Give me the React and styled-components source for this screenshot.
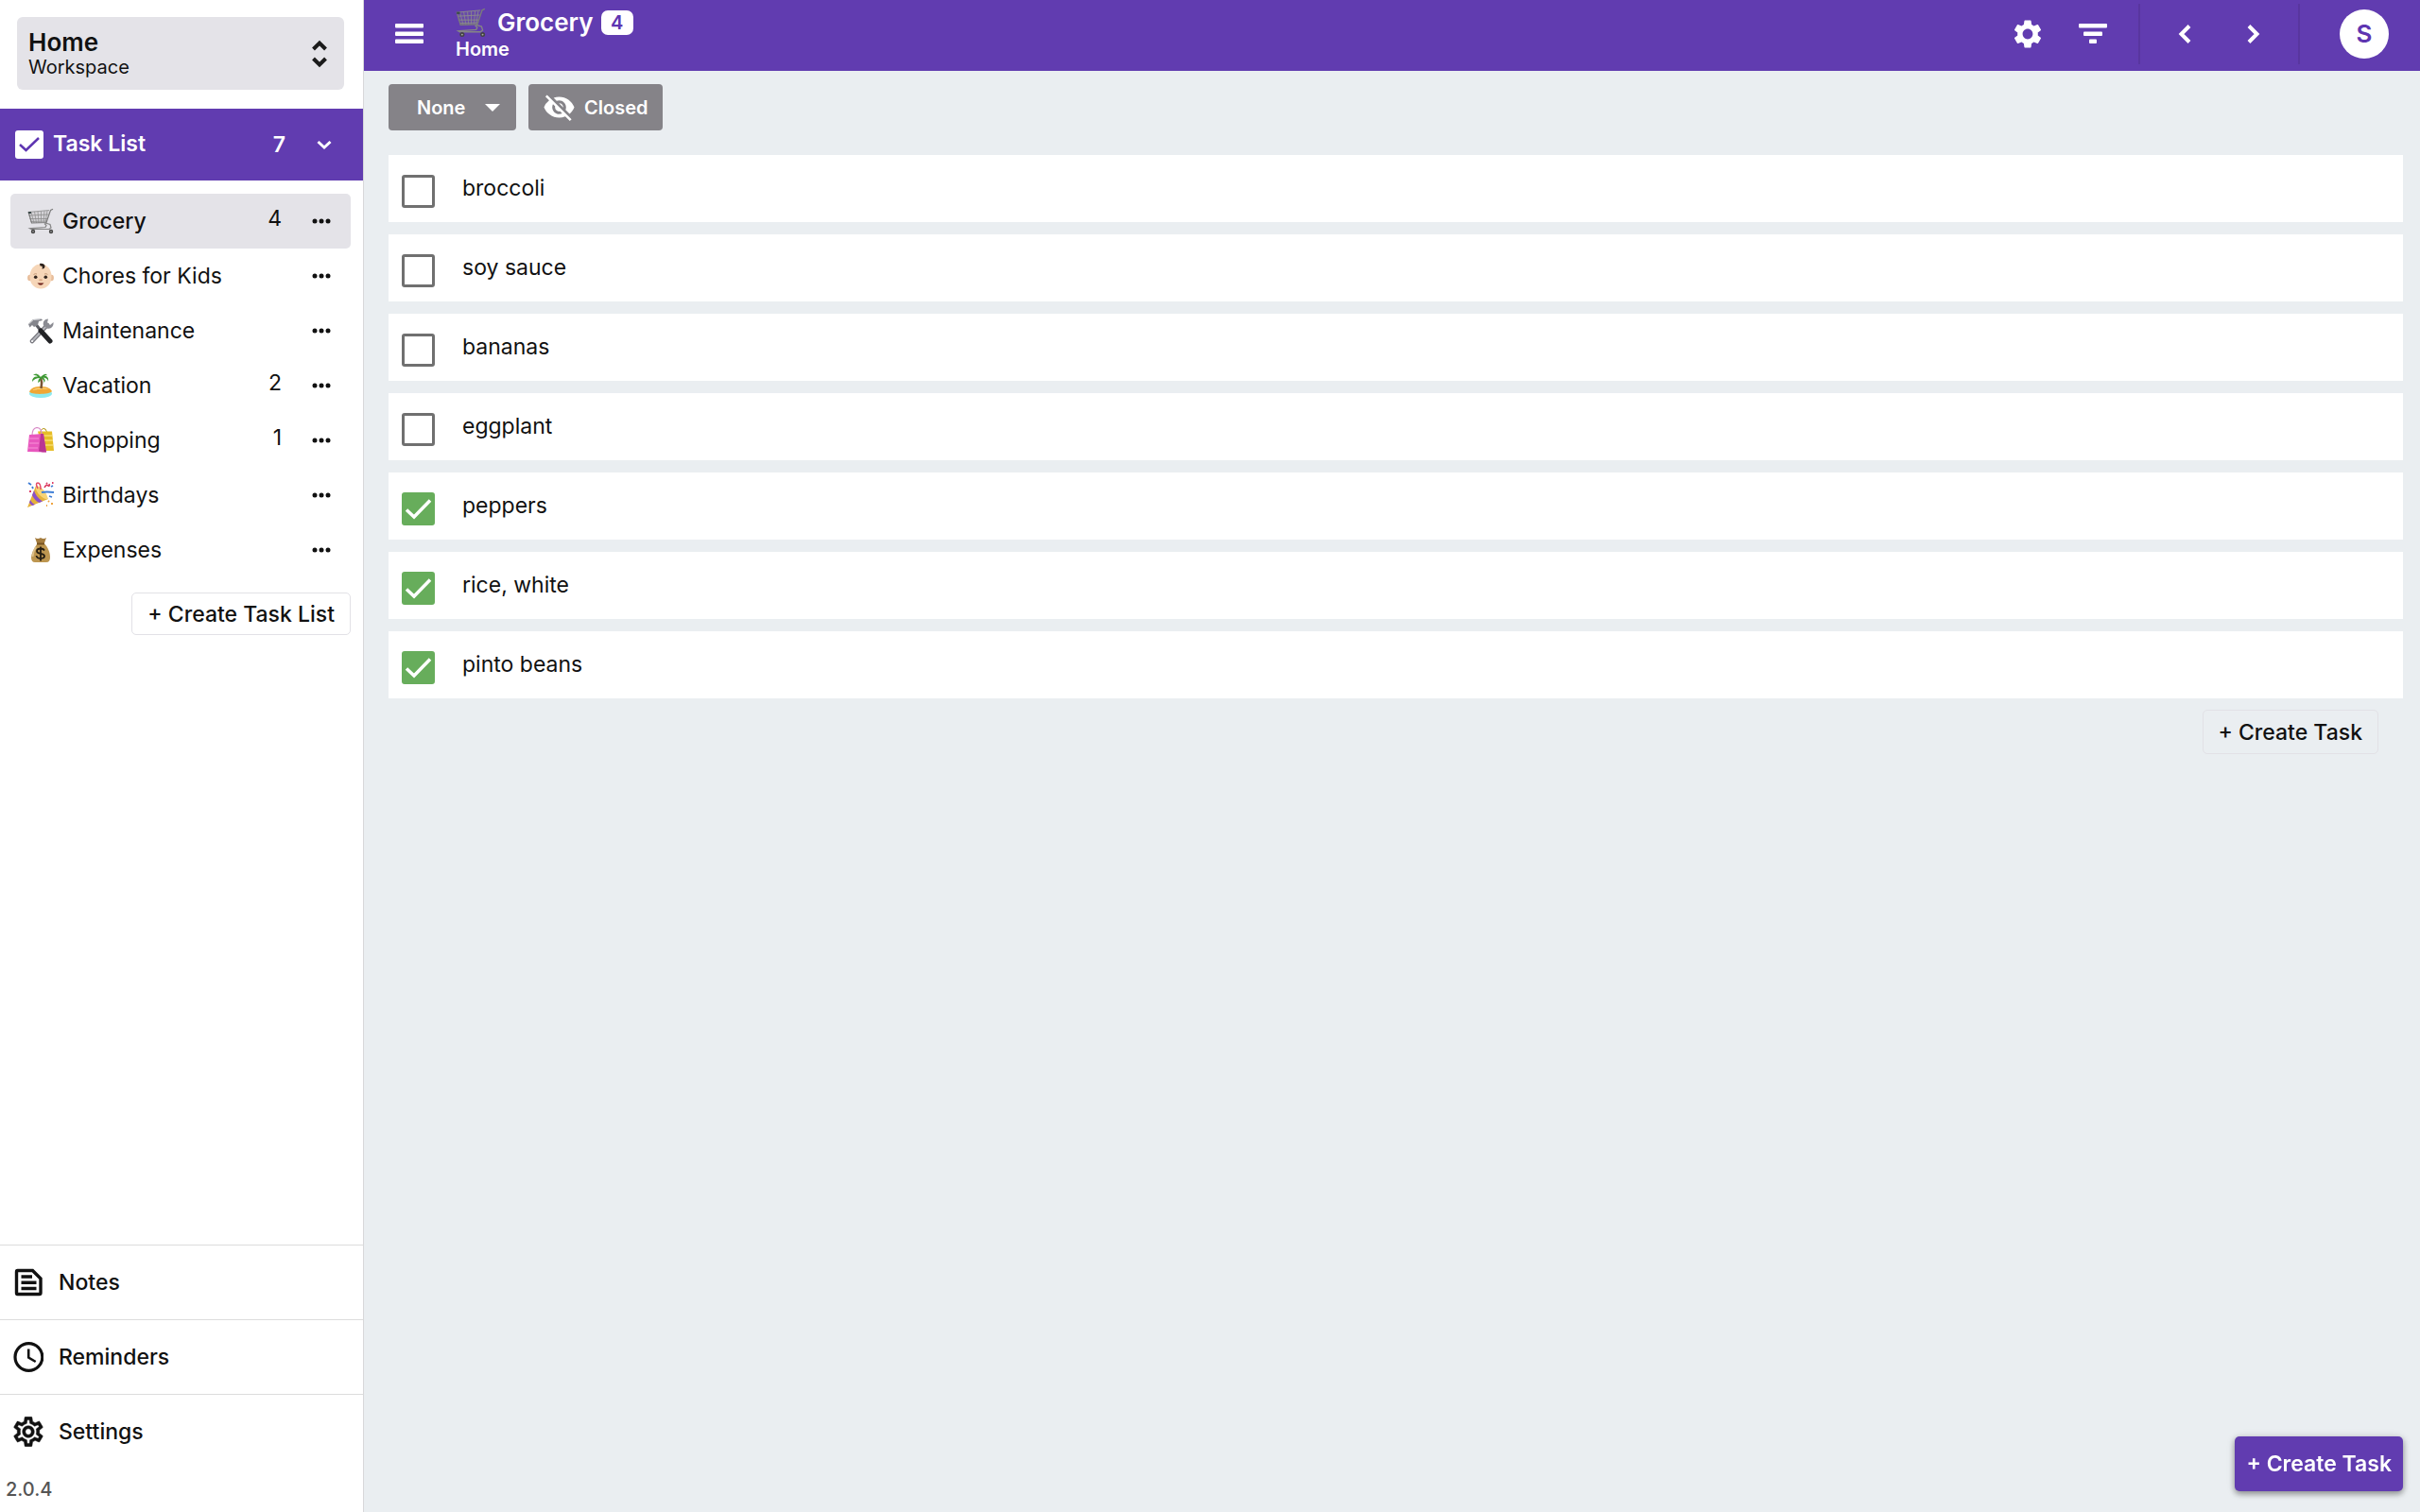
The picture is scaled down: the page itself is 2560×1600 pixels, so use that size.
import React, { useState } from 'react';
import styled, { createGlobalStyle } from 'styled-components';
import { MdSettings, MdOutlineSettings, MdVisibilityOff } from 'react-icons/md';

const GlobalStyle = createGlobalStyle`
    * {
        box-sizing: border-box;
    }
    body {
        margin: 0;
        background: #eaeef1;
        color: #111;
        font-family: Inter, "Liberation Sans", sans-serif;
        font-size: 23px;
        line-height: 28px;
    }
    button, select, input {
        font: inherit;
        color: inherit;
        margin: 0;
    }
    button {
        cursor: pointer;
        background: none;
        border: 0;
        padding: 0;
    }
    a {
        color: inherit;
        text-decoration: none;
    }
    ul {
        list-style: none;
        margin: 0;
        padding: 0;
    }
    svg {
        display: block;
        flex: none;
    }
`

const Page = styled.div`
    display: grid;
    grid-template-columns: 385px 1fr;
    min-height: 100vh;
`

const Sidebar = styled.aside`
    display: flex;
    flex-direction: column;
    background: #fff;
    border-right: 1px solid #d8d8da;
`

const WorkspaceButton = styled.button`
    display: flex;
    align-items: center;
    justify-content: space-between;
    margin: 18px 20px 20px 18px;
    padding: 0 12px;
    height: 77px;
    border-radius: 6px;
    background: #e4e3e8;
    text-align: left;
`

const WorkspaceName = styled.strong`
    display: block;
    font-size: 26px;
    font-weight: 600;
    line-height: 28px;
`

const WorkspaceKind = styled.span`
    display: block;
    font-size: 20px;
    line-height: 24px;
`

const SectionHeader = styled.button`
    display: flex;
    align-items: center;
    height: 76px;
    padding: 0 31px 0 16px;
    background: #613cb0;
    color: #fff;
    font-weight: 600;
    .title {
        flex: 1;
        margin-left: 10px;
        padding-bottom: 2px;
        text-align: left;
    }
    .count {
        margin-right: 31px;
    }
`

const Lists = styled.ul`
    padding: 14px 13px 0 11px;
`

const ListRow = styled.li`
    display: flex;
    align-items: center;
    height: 58px;
    padding: 0 21px 0 18px;
    border-radius: 5px;
    background: ${({ $active }) => ($active ? '#e4e3e8' : 'transparent')};
    font-weight: ${({ $active }) => ($active ? 500 : 400)};
    a {
        display: flex;
        flex: 1;
        align-items: center;
        gap: 9px;
    }
    .count {
        padding-bottom: 6px;
        font-weight: 400;
    }
    button {
        margin-left: 32px;
    }
`

const OutlineButton = styled.button`
    height: ${({ $height }) => $height}px;
    padding: 0 16px;
    border: 1px solid #e2e1e6;
    border-radius: 5px;
    font-weight: 500;
`

const ListActions = styled.div`
    display: flex;
    justify-content: flex-end;
    padding: 16px 13px 16px 0;
`

const BottomNav = styled.nav`
    margin-top: auto;
    a {
        display: flex;
        align-items: center;
        gap: 16px;
        height: 79px;
        padding-left: 14px;
        border-top: 1px solid #dcdcdc;
        font-weight: 500;
    }
`

const Version = styled.div`
    height: 46px;
    padding-left: 6px;
    color: #555;
    font-size: 20px;
    font-weight: 500;
    line-height: 44px;
`

const Main = styled.main`
    min-width: 0;
`

const TopBar = styled.header`
    display: flex;
    align-items: center;
    height: 75px;
    padding: 0 33px 3px;
    background: #613cb0;
    color: #fff;
`

const Heading = styled.div`
    flex: 1;
    margin-left: 33px;
    h1 {
        display: flex;
        align-items: center;
        gap: 12px;
        margin: 0;
        font-size: 26px;
        font-weight: 600;
        line-height: 30px;
    }
    p {
        margin: 0;
        font-size: 20px;
        font-weight: 600;
        line-height: 24px;
    }
`

const Badge = styled.span`
    min-width: 34px;
    margin-left: -4px;
    border-radius: 7px;
    background: #fff;
    color: #5e35b1;
    font-size: 20px;
    line-height: 26px;
    text-align: center;
`

const BarGroup = styled.div`
    display: flex;
    align-items: center;
    justify-content: space-between;
    width: ${({ $width }) => $width}px;
    height: 64px;
    padding: 0 ${({ $pad }) => $pad}px;
    border-right: 2px solid #59369f;
`

const Avatar = styled.button`
    width: 52px;
    height: 52px;
    margin: 0 0 0 42px;
    border-radius: 50%;
    background: #fff;
    color: #5e35b1;
    font-size: 26px;
    font-weight: 600;
`

const Filters = styled.div`
    display: flex;
    gap: 13px;
    padding: 14px 26px 26px;
    color: #fff;
    font-size: 20px;
    font-weight: 600;
`

const SortBox = styled.div`
    display: grid;
    align-items: center;
    width: 135px;
    height: 49px;
    border-radius: 4px;
    background: #858388;
    select, svg {
        grid-area: 1 / 1;
    }
    select {
        height: 100%;
        padding: 0 30px;
        border: 0;
        background: none;
        appearance: none;
    }
    option {
        color: #111;
    }
    svg {
        justify-self: end;
        margin-right: 17px;
        pointer-events: none;
    }
`

const ClosedButton = styled.button`
    display: flex;
    align-items: center;
    gap: 9px;
    height: 49px;
    padding: 0 16px 0 15px;
    border-radius: 4px;
    background: #858388;
`

const Tasks = styled.ul`
    display: flex;
    flex-direction: column;
    gap: 13px;
    padding: 0 18px 0 26px;
`

const TaskRow = styled.li`
    background: #fff;
    label {
        display: flex;
        align-items: center;
        gap: 29px;
        height: 71px;
        padding: 0 14px;
        cursor: pointer;
    }
    span {
        padding-bottom: 2px;
    }
`

const CheckCell = styled.div`
    display: grid;
    padding-top: 6px;
    input, svg {
        grid-area: 1 / 1;
    }
    input {
        width: 35px;
        height: 35px;
        border: 3px solid #707070;
        border-radius: 3px;
        appearance: none;
        cursor: pointer;
    }
    input:checked {
        border-color: #67ad5b;
        background: #67ad5b;
    }
    svg {
        pointer-events: none;
    }
`

const TaskActions = styled.div`
    display: flex;
    justify-content: flex-end;
    padding: 12px 44px;
`

const Fab = styled.button`
    position: fixed;
    right: 18px;
    bottom: 22px;
    height: 58px;
    padding: 0 12px;
    border-radius: 5px;
    background: #613cb0;
    box-shadow: 0 3px 6px rgba(0, 0, 0, .35), 0 1px 10px rgba(0, 0, 0, .14);
    color: #fff;
    font-weight: 600;
`

const Cart = ({ size = 28 }) => (
    <svg width={size} height={size} viewBox="0 0 28 28" fill="none" aria-hidden="true">
        <path d="M1 4l22-1.500-2.500 13.500H5z" fill="#8c8c8c" fillOpacity=".18" />
        <path d="M1 4.500l22-2M1.700 8l20.700-1M2.400 11.500h19.300M3.500 14.500l17.600-.5" stroke="#8b8b8b" strokeWidth=".8" />
        <path d="M4 4.500L7 16M7.500 4l2 12M11 3.800l1 12M14.500 3.500v12M18 3.200l-1 12.500M21 3l-2 12.500" stroke="#8b8b8b" strokeWidth=".7" />
        <path d="M1 4l3.500 12 15.500-.5 4.500-13 2.500-1.200" stroke="#7b7b7b" strokeWidth="1.200" />
        <path d="M19 16l5 1.500 1 3.500-2 1.500H4l-1.500-.8L19 20.500l1-2-2-2" stroke="#858585" strokeWidth="1.200" />
        <circle cx="6" cy="25" r="2.200" fill="#444" />
        <circle cx="25" cy="25" r="2.200" fill="#444" />
        <circle cx="6" cy="25" r=".8" fill="#aaa" />
        <circle cx="25" cy="25" r=".8" fill="#aaa" />
        <rect x="1" y="4" width="3" height="2" fill="#3c4a4a" />
    </svg>
)

const Baby = () => (
    <svg width="28" height="28" viewBox="0 0 28 28" aria-hidden="true">
        <ellipse cx="2.500" cy="16" rx="2.400" ry="3.200" fill="#e8bd9a" />
        <ellipse cx="25.500" cy="16" rx="2.400" ry="3.200" fill="#e8bd9a" />
        <path d="M14 1.500C6.500 1.500 2.500 8 2.500 14.500 2.500 22 7 27.500 14 27.500s11.500-5.500 11.500-13C25.500 8 21.500 1.500 14 1.500z" fill="#f6d6b8" />
        <path d="M13 1c5-1 7 3 4.500 5-1 .8-2 .4-2.500 0 1.500-.5 1.500-2.500-1.500-2.500z" fill="#2b211c" />
        <path d="M6.500 12.500q2-1.500 3.500-.5M18 12q2-1 3.500.5" fill="none" stroke="#c49a78" />
        <circle cx="8.700" cy="15.300" r="1.800" fill="#33261f" />
        <circle cx="19.300" cy="15.300" r="1.800" fill="#33261f" />
        <ellipse cx="14" cy="18.300" rx="2" ry="1" fill="#dba984" />
        <path d="M10.500 21.500h7q-3.500 4.500-7 0z" fill="#6f241d" />
    </svg>
)

const Tools = () => (
    <svg width="28" height="28" viewBox="0 0 28 28" fill="none" aria-hidden="true">
        <path d="M21 8L5 25" stroke="#75757c" strokeWidth="4.500" strokeLinecap="round" />
        <path d="M21 8L5 25" stroke="#b4b5bb" strokeWidth="2" strokeLinecap="round" />
        <path d="M22 1.500c-4 0-6 3-5 7l4 3c4 1 7-2 6.500-6.500l-3.500 3-3-2.500z" fill="#8b8c93" />
        <path d="M8 6l7 9" stroke="#5b5c63" strokeWidth="3" />
        <path d="M14 14l10 11" stroke="#222326" strokeWidth="5" strokeLinecap="round" />
        <path d="M1 7l5-5 9-.5 1 1.500-4 1-1 4-4 2-2-2-2.500 2.500z" fill="#85868d" />
        <path d="M2 6.500l4.500-4L13 2" stroke="#c8c9ce" />
        <circle cx="5" cy="25" r="1" fill="#fff" />
    </svg>
)

const Island = () => (
    <svg width="28" height="28" viewBox="0 0 28 28" fill="none" aria-hidden="true">
        <ellipse cx="14" cy="22.500" rx="12" ry="4.500" fill="#8deaf0" />
        <path d="M2 20.500C4 16 9 15 14 15s10 1 12 5c-2 3.500-22 4-24 .500z" fill="#f0a735" />
        <path d="M4 19q9-5 19-1-9-1-19 1z" fill="#fbd27a" />
        <path d="M14 5q2 6 .5 12" stroke="#7a5534" strokeWidth="2.500" />
        <path d="M14 5Q10-1 6 3q4-.5 5 1.500Q5 4 5 10q3-4 8-4-2 2-2 5 3-1 3.500-5Q18 8 17.500 11 20 9 17 5.500q4 .5 5 4 1-5-4-6 2-1 3 0-1-4-7 1.500z" fill="#3f9a35" />
    </svg>
)

const Bags = () => (
    <svg width="28" height="28" viewBox="0 0 28 28" fill="none" aria-hidden="true">
        <path d="M14 6V4q2-4 5-2l2 4" stroke="#b4940e" />
        <path d="M11 4.500h15L28 25H16z" fill="#e6bd27" />
        <path d="M12 9h14M13 14h14M13 19h14" stroke="#f7dc6c" strokeWidth="1.500" />
        <path d="M5 9q0-8 5-8.500 5 .5 5 7" stroke="#d88bc7" strokeWidth="1.200" />
        <path d="M2 8l15-1 3 19.500L0 26z" fill="#e857be" />
        <path d="M14 7h3l3 19.500h-4l-4-1z" fill="#b93494" />
        <path d="M2 12h10M2 17h10M1 22h10" stroke="#f27fd0" strokeWidth="1.500" />
    </svg>
)

const Party = () => (
    <svg width="28" height="28" viewBox="0 0 28 28" fill="none" aria-hidden="true">
        <path d="M9 4L0 27l22-9q-8-3-13-14z" fill="#e5b23a" />
        <path d="M7 9q2 7 9 11.500l-3.500 1.500Q7 19 5 14zM3 19q2 4 5 5l-3 1-3-3z" fill="#8a50c8" />
        <path d="M9 4q-1 5 4 10t9 4q-1-5-5-9.500T9 4z" fill="#f6d476" />
        <path d="M15 11q5-1 13 0" stroke="#3f7fd6" strokeWidth="2" />
        <path d="M11 7q-3-6 0-6t3 7" stroke="#e34a68" strokeWidth="1.500" />
        <path d="M18 6q2-4 4-2 2 1 1-2" stroke="#d9365b" strokeWidth="1.500" />
        <path d="M1 1l3 2M5 5l1 2M25 5l2-1M23 15l3 1" stroke="#3c7bd5" strokeWidth="1.800" />
        <path d="M26 1h1.500M20 1l1 1M2 10h2" stroke="#dc3c67" strokeWidth="2" />
        <path d="M25 23h2M22 20l1 1M20 25h1" stroke="#efa340" strokeWidth="2" />
    </svg>
)

const MoneyBag = () => (
    <svg width="28" height="28" viewBox="0 0 28 28" fill="none" aria-hidden="true">
        <path d="M8 1q3 2 6 0 3 2 6 0l-2.500 7h-7z" fill="#a47c3e" />
        <path d="M10.500 7h7C22 11 24 17 24 22q0 5-4 5H8q-4 0-4-5 0-5 6.500-15z" fill="#bd9650" />
        <path d="M9 11q-3 4-3.500 10" stroke="#dcc08a" strokeWidth="2" />
        <path d="M10 7.500h8" stroke="#765322" strokeWidth="2" />
        <path d="M18 14.500q-1-2-4-2-4 0-4 2.800c0 3.700 8 1.700 8 5.200 0 3-8 3.500-8.500-.5M14 10.500v15" stroke="#241d12" strokeWidth="1.800" />
    </svg>
)

const Dots = () => (
    <svg width="20" height="6" viewBox="0 0 20 6" fill="#111">
        <circle cx="3" cy="3" r="2.500" />
        <circle cx="10" cy="3" r="2.500" />
        <circle cx="17" cy="3" r="2.500" />
    </svg>
)

const Chevron = ({ d, width, height, weight = 4 }) => (
    <svg width={width} height={height} viewBox={`0 0 ${width} ${height}`} fill="none" stroke="currentColor" strokeWidth={weight}>
        <path d={d} />
    </svg>
)

const lists = [
    { name: 'Grocery', icon: <Cart />, count: 4 },
    { name: 'Chores for Kids', icon: <Baby /> },
    { name: 'Maintenance', icon: <Tools /> },
    { name: 'Vacation', icon: <Island />, count: 2 },
    { name: 'Shopping', icon: <Bags />, count: 1 },
    { name: 'Birthdays', icon: <Party /> },
    { name: 'Expenses', icon: <MoneyBag /> },
]

const NotesIcon = () => (
    <svg width="32" height="32" viewBox="0 0 32 32" fill="none" stroke="#111" strokeWidth="3.400">
        <path d="M4.500 3.500h16l8.500 8.500V27q0 1.500-1.500 1.500h-23Q3.500 28.500 3.500 27V5q0-1.500 1-1.500z" />
        <path d="M8.500 10H20M8.500 16.200h16M8.500 22.500h16" />
    </svg>
)

const ClockIcon = () => (
    <svg width="32" height="32" viewBox="0 0 32 32" fill="none" stroke="#111" strokeWidth="3.200">
        <circle cx="16.400" cy="16" r="14.400" />
        <path d="M16.200 7.500v9l7.500 4.500" strokeWidth="2.600" />
    </svg>
)

const App = () => {
    const [active, setActive] = useState('Grocery');
    const [tasks, setTasks] = useState([
        { name: 'broccoli', done: false },
        { name: 'soy sauce', done: false },
        { name: 'bananas', done: false },
        { name: 'eggplant', done: false },
        { name: 'peppers', done: true },
        { name: 'rice, white', done: true },
        { name: 'pinto beans', done: true },
    ]);

    const toggle = (name) => {
        setTasks(tasks.map((task) => (task.name === name ? { ...task, done: !task.done } : task)))
    }

    return (
        <Page>
            <GlobalStyle />
            <Sidebar>
                <WorkspaceButton>
                    <span>
                        <WorkspaceName>Home</WorkspaceName>
                        <WorkspaceKind>Workspace</WorkspaceKind>
                    </span>
                    <svg width="28" height="32" viewBox="0 0 28 32" fill="none" stroke="#1b1b1b" strokeWidth="4">
                        <path d="M7.500 11l6.500-6.500 6.500 6.500M7.500 21l6.500 6.500 6.500-6.500" />
                    </svg>
                </WorkspaceButton>
                <SectionHeader>
                    <svg width="30" height="30" viewBox="0 0 30 30" fill="none">
                        <rect width="30" height="30" rx="3" fill="#fff" />
                        <path d="M5 15l6.500 6L25 8" stroke="#5e35b1" strokeWidth="2.500" />
                    </svg>
                    <span className="title">Task List</span>
                    <span className="count">7</span>
                    <Chevron width={20} height={14} weight={3} d="M3.500 4l6.500 6 6.500-6" />
                </SectionHeader>
                <Lists>
                    {lists.map((list) => (
                        <ListRow key={list.name} $active={list.name === active}>
                            <a href={`#${list.name}`} onClick={() => setActive(list.name)}>
                                {list.icon}
                                {list.name}
                            </a>
                            <span className="count">{list.count}</span>
                            <button aria-label={`${list.name} options`}><Dots /></button>
                        </ListRow>
                    ))}
                </Lists>
                <ListActions>
                    <OutlineButton $height={45}>+ Create Task List</OutlineButton>
                </ListActions>
                <BottomNav>
                    <a href="#notes"><NotesIcon />Notes</a>
                    <a href="#reminders"><ClockIcon />Reminders</a>
                    <a href="#settings">
                        <MdOutlineSettings size={32} viewBox="1.800 1.800 20.400 20.400" stroke="currentColor" strokeWidth=".3" />
                        Settings
                    </a>
                </BottomNav>
                <Version>2.0.4</Version>
            </Sidebar>
            <Main>
                <TopBar>
                    <button aria-label="Menu">
                        <svg width="31" height="22" viewBox="0 0 31 22" fill="#fff">
                            <rect width="30" height="4.500" rx="1" />
                            <rect y="8.500" width="30" height="4.500" rx="1" />
                            <rect y="16.500" width="30" height="4.500" rx="1" />
                        </svg>
                    </button>
                    <Heading>
                        <h1><Cart size={32} />Grocery<Badge>4</Badge></h1>
                        <p>Home</p>
                    </Heading>
                    <BarGroup $width={137} $pad={0}>
                        <button aria-label="List settings"><MdSettings size={36} /></button>
                        <button aria-label="Filter">
                            <svg width="63" height="22" viewBox="0 0 63 22" fill="#fff">
                                <rect width="30" height="4.500" rx="1" />
                                <rect x="5" y="8.500" width="20" height="4.500" rx="1" />
                                <rect x="11" y="16.500" width="8" height="4.500" rx="1" />
                            </svg>
                        </button>
                    </BarGroup>
                    <BarGroup $width={169} $pad={38}>
                        <button aria-label="Previous"><Chevron width={18} height={24} d="M14 3.500l-8.500 8.500 8.500 8.500" /></button>
                        <button aria-label="Next"><Chevron width={18} height={24} d="M4 3.500l8.500 8.500-8.500 8.500" /></button>
                    </BarGroup>
                    <Avatar aria-label="Account">S</Avatar>
                </TopBar>
                <Filters>
                    <SortBox>
                        <select aria-label="Sort by">
                            <option>None</option>
                        </select>
                        <svg width="16" height="8" viewBox="0 0 16 8" fill="#fff"><path d="M0 0h16L8 8z" /></svg>
                    </SortBox>
                    <ClosedButton><MdVisibilityOff size={35} />Closed</ClosedButton>
                </Filters>
                <Tasks>
                    {tasks.map((task) => (
                        <TaskRow key={task.name}>
                            <label>
                                <CheckCell>
                                    <input type="checkbox" checked={task.done} onChange={() => toggle(task.name)} />
                                    {task.done && (
                                        <svg width="35" height="35" viewBox="0 0 35 35" fill="none" stroke="#fff" strokeWidth="3.500">
                                            <path d="M5 18.500l8 7.500L30 8.500" />
                                        </svg>
                                    )}
                                </CheckCell>
                                <span>{task.name}</span>
                            </label>
                        </TaskRow>
                    ))}
                </Tasks>
                <TaskActions>
                    <OutlineButton $height={47}>+ Create Task</OutlineButton>
                </TaskActions>
            </Main>
            <Fab>+ Create Task</Fab>
        </Page>
    );
}

export default App;
